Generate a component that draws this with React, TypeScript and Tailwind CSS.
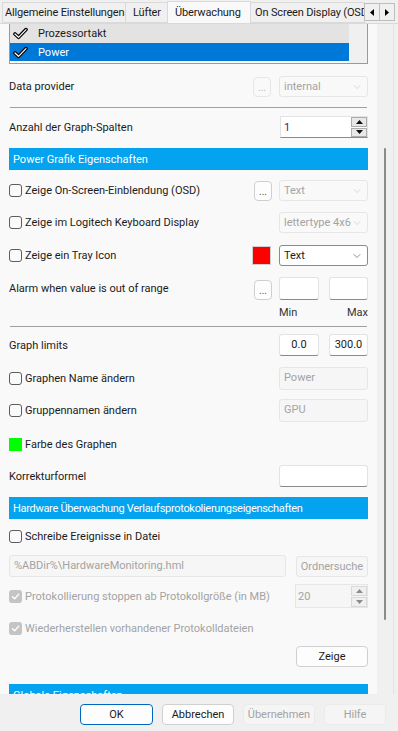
import React from 'react';
import { ChevronDown } from 'lucide-react';

const TXT = 'text-[#1b1b1b]';
const DIS = 'text-[#a3a3a3]';

function WhiteCheck() {
  return (
    <svg width="9" height="9" viewBox="0 0 10 10">
      <path d="M1.6 5.3 L4 7.6 L8.5 2.5" fill="none" stroke="#fff" strokeWidth="1.5" strokeLinecap="round" strokeLinejoin="round" />
    </svg>
  );
}

function ListCheck() {
  return (
    <svg width="15" height="13" viewBox="0 0 15 13">
      <path d="M2 7 L5.5 10.3 L13 2.6" fill="none" stroke="#000" strokeWidth="3.6" strokeLinecap="round" strokeLinejoin="round" />
      <path d="M2 7 L5.5 10.3 L13 2.6" fill="none" stroke="#fff" strokeWidth="1.2" strokeLinecap="round" strokeLinejoin="round" />
    </svg>
  );
}

function Box({ checked }: { checked?: boolean }) {
  if (checked) {
    return (
      <span className="flex h-[13px] w-[13px] shrink-0 items-center justify-center rounded-[3px] bg-[#c4c4c4]">
        <WhiteCheck />
      </span>
    );
  }
  return <span className="h-[13px] w-[13px] shrink-0 rounded-[3px] border border-[#5d5d5d] bg-[#fafafa]" />;
}

function CheckLabel({ label, checked, disabled }: { label: string; checked?: boolean; disabled?: boolean }) {
  return (
    <div className="flex items-center gap-[3px] whitespace-nowrap">
      <Box checked={checked} />
      <span className={disabled ? DIS : TXT}>{label}</span>
    </div>
  );
}

function Dots({ disabled }: { disabled?: boolean }) {
  return (
    <div
      className={
        'flex h-[20px] w-[18px] items-end justify-center rounded-[4px] border pb-[3px] text-[10px] leading-none ' +
        (disabled ? 'border-[#e6e6e6] bg-[#f9f9f9] text-[#b5b5b5]' : 'border-[#cfcfcf] bg-[#fdfdfd] text-[#555]')
      }
    >
      ...
    </div>
  );
}

function Combo({ value, disabled }: { value: string; disabled?: boolean }) {
  return (
    <div
      className={
        'flex h-[21px] w-[89px] items-center justify-between whitespace-nowrap rounded-[3px] border pl-[4px] pr-[4px] ' +
        (disabled ? 'border-[#e6e6e6] bg-[#f9f9f9] text-[#a3a3a3]' : 'border-[#8a8a8a] bg-white text-[#1b1b1b]')
      }
    >
      <span>{value}</span>
      <ChevronDown size={12} strokeWidth={1.2} className={disabled ? 'text-[#c4c4c4]' : 'text-[#444]'} />
    </div>
  );
}

function Field({ value, disabled, className = '', center }: { value?: string; disabled?: boolean; className?: string; center?: boolean }) {
  return (
    <div
      className={
        'flex items-start whitespace-nowrap rounded-[3px] border px-[4px] pt-[4px] ' +
        (center ? 'justify-center ' : '') +
        (disabled ? 'border-[#e6e6e6] bg-[#f6f6f6] text-[#a3a3a3] ' : 'border-[#e3e3e3] border-b-[#8a8a8a] bg-white text-[#1b1b1b] ') +
        className
      }
    >
      {value}
    </div>
  );
}

function Arrow({ up, color }: { up?: boolean; color: string }) {
  return (
    <svg width="7" height="4" viewBox="0 0 7 4">
      <path d={up ? 'M0 4 L3.5 0 L7 4 Z' : 'M0 0 L3.5 4 L7 0 Z'} fill={color} />
    </svg>
  );
}

function Spin({ disabled }: { disabled?: boolean }) {
  const c = disabled ? '#8c8c8c' : '#111';
  const b = disabled ? 'border-[#d9d9d9] bg-[#f0f0f0]' : 'border-[#adadad] bg-[#e8e8e8]';
  return (
    <div className="flex w-[16px] flex-col gap-[1px]">
      <div className={'flex h-[10px] items-center justify-center border ' + b}><Arrow up color={c} /></div>
      <div className={'flex h-[10px] items-center justify-center border ' + b}><Arrow color={c} /></div>
    </div>
  );
}

function Header({ title, className = '' }: { title: string; className?: string }) {
  return (
    <div className={'flex h-[22px] shrink-0 items-center whitespace-nowrap bg-[#03a3ef] pl-[4px] text-white ' + className}>{title}</div>
  );
}

function Row({ className = '', children }: { className?: string; children: React.ReactNode }) {
  return <div className={'flex shrink-0 items-center justify-between ' + className}>{children}</div>;
}

function Tab({ label, selected, className = '' }: { label: string; selected?: boolean; className?: string }) {
  return (
    <div
      className={
        'flex shrink-0 items-center overflow-hidden whitespace-nowrap border border-[#d9d9d9] tracking-[-0.15px] ' +
        (selected ? 'h-[23px] border-b-0 bg-[#f9f9f9] pb-[2px] ' : 'h-[21px] bg-[#f0f0f0] ') +
        className
      }
    >
      {label}
    </div>
  );
}

function DlgButton({ label, variant }: { label: string; variant?: 'default' | 'disabled' }) {
  const cls =
    variant === 'default'
      ? 'border-[#0067c0] bg-[#fdfdfd] text-[#1b1b1b]'
      : variant === 'disabled'
      ? 'border-[#ebebeb] bg-[#f5f5f5] text-[#a3a3a3]'
      : 'border-[#d0d0d0] bg-[#fdfdfd] text-[#1b1b1b]';
  return (
    <div className={'flex h-[21px] items-center justify-center rounded-[4px] border ' + cls}>{label}</div>
  );
}

export default function App() {
  return (
    <div className={"flex h-[731px] w-[398px] flex-col overflow-hidden bg-[#f0f0f0] text-[11px] leading-none font-['Roboto',sans-serif] " + TXT}>
      {/* tabs */}
      <div className="relative flex h-[24px] shrink-0 items-end overflow-hidden border-b border-[#d9d9d9] pl-[2px]">
        <Tab label="Allgemeine Einstellungen" className="w-[124px] pl-[2px]" />
        <Tab label="Lüfter" className="-ml-px w-[43px] pl-[7px]" />
        <Tab label="Überwachung" selected className="relative z-10 -mb-px -ml-px w-[84px] pl-[7px]" />
        <Tab label="On Screen Display (OSD)" className="-ml-px w-[115px] pl-[4px]" />
        <div className="absolute right-[3px] top-[3px] z-20 flex">
          <div className="flex h-[18px] w-[16px] items-center justify-center border border-[#bdbdbd] bg-[#f0f0f0]">
            <svg width="4" height="7" viewBox="0 0 4 7"><path d="M4 0 L0 3.5 L4 7 Z" fill="#000" /></svg>
          </div>
          <div className="-ml-px flex h-[18px] w-[16px] items-center justify-center border border-[#bdbdbd] bg-[#f0f0f0]">
            <svg width="4" height="7" viewBox="0 0 4 7"><path d="M0 0 L4 3.5 L0 7 Z" fill="#000" /></svg>
          </div>
        </div>
      </div>

      {/* tab pane */}
      <div className="flex h-[670px] w-[394px] shrink-0 border-r border-[#e3e3e3] bg-[#f9f9f9]">
        <div className="flex w-[377px] flex-col overflow-hidden px-[9px]">
          {/* list box, scrolled */}
          <div className="flex h-[40px] shrink-0 border-x border-b border-[#9a9a9a] bg-white">
            <div className="flex flex-1 flex-col">
              <div className="flex h-[19px] items-center gap-[10px] bg-[#e3e3e3] pl-[3px]">
                <ListCheck />
                <span>Prozessortakt</span>
              </div>
              <div className="flex h-[18px] items-center gap-[10px] bg-[#0078d7] pl-[3px] text-white">
                <ListCheck />
                <span>Power</span>
              </div>
            </div>
            <div className="w-[18px] bg-[#f0f0f0]" />
          </div>

          <Row className="mt-[12px] h-[21px]">
            <span>Data provider</span>
            <div className="flex items-center gap-[8px]">
              <Dots disabled />
              <Combo value="internal" disabled />
            </div>
          </Row>

          <div className="mx-[1px] mt-[10px] h-px shrink-0 bg-[#a0a0a0]" />

          <Row className="mt-[8px] h-[22px]">
            <span>Anzahl der Graph-Spalten</span>
            <div className="flex h-[22px] w-[88px] border border-[#e3e3e3] border-b-[#8a8a8a] bg-white">
              <div className="flex-1 pl-[3px] pt-[5px] text-[#4b1c6e]">1</div>
              <Spin />
            </div>
          </Row>

          <Header title="Power Grafik Eigenschaften" className="mt-[10px]" />

          <Row className="mt-[10px] h-[21px]">
            <CheckLabel label="Zeige On-Screen-Einblendung (OSD)" />
            <div className="flex items-center gap-[7px]">
              <Dots />
              <Combo value="Text" disabled />
            </div>
          </Row>

          <Row className="mt-[11px] h-[21px]">
            <CheckLabel label="Zeige im Logitech Keyboard Display" />
            <Combo value="lettertype 4x6" disabled />
          </Row>

          <Row className="mt-[12px] h-[21px]">
            <CheckLabel label="Zeige ein Tray Icon" />
            <div className="flex items-center gap-[8px]">
              <div className="h-[19px] w-[19px] border border-[#d0d0d0] bg-[#ff0000]" />
              <Combo value="Text" />
            </div>
          </Row>

          <Row className="mt-[11px] h-[23px]">
            <span>Alarm when value is out of range</span>
            <div className="flex items-end gap-[7px]">
              <Dots />
              <Field className="h-[23px] w-[40px]" />
              <Field className="ml-[3px] h-[23px] w-[39px]" />
            </div>
          </Row>

          <div className="mt-[5px] flex h-[14px] shrink-0 justify-end text-[#333]">
            <div className="flex w-[89px] items-center justify-between">
              <span>Min</span>
              <span>Max</span>
            </div>
          </div>

          <div className="mx-[1px] mt-[7px] h-px shrink-0 bg-[#a0a0a0]" />

          <Row className="mt-[7px] h-[22px]">
            <span>Graph limits</span>
            <div className="flex gap-[10px]">
              <Field value="0.0" center className="h-[22px] w-[40px]" />
              <Field value="300.0" center className="h-[22px] w-[39px]" />
            </div>
          </Row>

          <Row className="mt-[11px] h-[23px]">
            <CheckLabel label="Graphen Name ändern" />
            <Field value="Power" disabled className="h-[23px] w-[89px]" />
          </Row>

          <Row className="mt-[9px] h-[23px]">
            <CheckLabel label="Gruppennamen ändern" />
            <Field value="GPU" disabled className="h-[23px] w-[89px]" />
          </Row>

          <Row className="mt-[12px] h-[20px] justify-start gap-[3px]">
            <div className="h-[13px] w-[13px] bg-[#00ff00]" />
            <span>Farbe des Graphen</span>
          </Row>

          <Row className="mt-[11px] h-[22px]">
            <span>Korrekturformel</span>
            <Field className="h-[22px] w-[89px]" />
          </Row>

          <Header title="Hardware Überwachung Verlaufsprotokolierungseigenschaften" className="mt-[10px] tracking-[-0.3px]" />

          <Row className="mt-[8px] h-[18px] justify-start">
            <CheckLabel label="Schreibe Ereignisse in Datei" />
          </Row>

          <Row className="mt-[10px] h-[22px]">
            <Field value="%ABDir%\HardwareMonitoring.hml" disabled className="h-[22px] w-[277px]" />
            <div className="flex h-[21px] w-[72px] items-center justify-center rounded-[3px] border border-[#e6e6e6] bg-[#f6f6f6] text-[#a3a3a3]">
              Ordnersuche
            </div>
          </Row>

          <Row className="mt-[7px] h-[24px]">
            <CheckLabel label="Protokollierung stoppen ab Protokollgröße  (in MB)" checked disabled />
            <div className="flex h-[24px] w-[73px] items-center border border-[#e6e6e6] bg-[#f6f6f6]">
              <div className="flex-1 self-start pl-[2px] pt-[6px] text-[#a3a3a3]">20</div>
              <Spin disabled />
            </div>
          </Row>

          <Row className="mt-[10px] h-[20px] justify-start">
            <CheckLabel label="Wiederherstellen vorhandener Protokolldateien" checked disabled />
          </Row>

          <Row className="mt-[8px] h-[21px] justify-end">
            <div className="flex h-[21px] w-[72px] items-center justify-center rounded-[4px] border border-[#d0d0d0] bg-[#fdfdfd]">
              Zeige
            </div>
          </Row>

          <Header title="Globale Eigenschaften" className="mt-[17px]" />
        </div>

        {/* scrollbar */}
        <div className="flex w-[16px] flex-col items-center bg-[#f0f0f0]">
          <div className="mt-[124px] h-[472px] w-[2px] rounded-full bg-[#8a8a8a]" />
        </div>
      </div>

      {/* dialog buttons */}
      <div className="flex flex-1 items-start gap-[9px] pl-[80px] pt-[10px]">
        <div className="w-[73px]"><DlgButton label="OK" variant="default" /></div>
        <div className="w-[72px]"><DlgButton label="Abbrechen" /></div>
        <div className="w-[72px]"><DlgButton label="Übernehmen" variant="disabled" /></div>
        <div className="w-[62px]"><DlgButton label="Hilfe" variant="disabled" /></div>
      </div>
    </div>
  );
}
